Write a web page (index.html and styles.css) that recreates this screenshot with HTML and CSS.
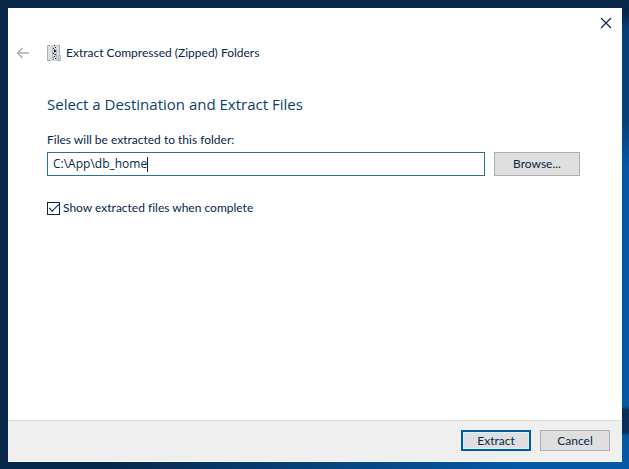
FILE: index.html
```html
<!DOCTYPE html>
<html lang="en">
<head>
<meta charset="utf-8">
<title>Extract Compressed (Zipped) Folders</title>
<link rel="stylesheet" href="styles.css">
</head>
<body>
<form class="dialog">
  <div class="titlebar">
    <button class="icon-button" type="button" aria-label="Close">
      <svg width="12" height="12" viewBox="0 0 12 12"><path d="M1 1l10 10M11 1L1 11" fill="none" stroke="#082648" stroke-width="1.2"/></svg>
    </button>
  </div>
  <header class="header">
    <button class="icon-button" type="button" aria-label="Back">
      <svg width="14" height="12" viewBox="0 0 14 12"><path d="M13 6H2M6.500 1L1.500 6l5 5" fill="none" stroke="#adadb2" stroke-width="1.500"/></svg>
    </button>
    <svg class="zip" width="14" height="18" viewBox="0 0 14 18" aria-hidden="true">
      <path d="M0 1h12v10h1v6H0z" fill="#dedede"/>
      <path d="M3 1.500H.5v15H3M10 1.500h2.500v9M10 16.500h3.500v-5H11.500v4" fill="none" stroke="#adadb2"/>
      <path d="M5 2h1v14H5zM9 5h1v11H9z" fill="#b6b8bd"/>
      <path d="M7 1h1v1H7zM8 3h1v1H8zM6 4h1v1H6zM7 6h2v2H7zM6 9h1v1H6zM8 10h1v1H8zM7 12h1v1H7zM8 14h1v1H8z" fill="#082648"/>
      <path d="M7 5h1v1H7zM7 8h1v1H7zM7 10h1v1H7zM6 13h1v1H6zM6 15h1v1H6z" fill="#5c82a3"/>
    </svg>
    <span>Extract Compressed (Zipped) Folders</span>
  </header>
  <main class="content">
    <h1>Select a Destination and Extract Files</h1>
    <label class="path-label" for="path">Files will be extracted to this folder:</label>
    <div class="path-row">
      <div class="path-box">
        <input id="path" type="text" value="C:\App\db_home">
        <span class="caret"></span>
      </div>
      <button class="button browse" type="button">Browse...</button>
    </div>
    <label class="check"><input type="checkbox" checked>Show extracted files when complete</label>
  </main>
  <footer class="footer">
    <button class="button primary" type="submit">Extract</button>
    <button class="button" type="button">Cancel</button>
  </footer>
</form>
</body>
</html>
```
FILE: styles.css
```css
* {
  box-sizing: border-box;
}

body {
  margin: 0;
  min-height: 100vh;
  padding: 8px 7px 7px 8px;
  display: flex;
  color: #082648;
  font: 12px/16px Lato, "Open Sans", sans-serif;
  font-variant-ligatures: none;
  background:
    linear-gradient(#082648 0 12px, #06407a 30px 120px, #0558a4 165px 406px, #082f5a 410px 432px, #0558a4 436px) right / 7px 100% no-repeat,
    linear-gradient(90deg, #082648 15%, #063e74 45%, #0558a4 82%) bottom / 100% 7px no-repeat,
    #082648;
}

button,
input {
  font: inherit;
  color: inherit;
}

.dialog {
  flex: 1;
  display: flex;
  flex-direction: column;
  background: #fff;
}

.titlebar {
  display: flex;
  justify-content: flex-end;
  height: 30px;
  padding: 0 10px;
}

.icon-button {
  display: flex;
  align-items: center;
  padding: 0;
  border: 0;
  background: none;
}

.header {
  display: flex;
  align-items: center;
  height: 30px;
  padding-left: 8px;
}

.zip {
  margin: 0 5px 0 17px;
}

.content {
  flex: 1;
  padding: 24px 42px 0 39px;
}

h1 {
  margin: 0 0 16px;
  font-family: "Open Sans", sans-serif;
  font-size: 15px;
  line-height: 24px;
  font-weight: 400;
  color: #0b3f6b;
}

.path-label {
  display: block;
  margin-bottom: 4px;
}

.path-row {
  display: flex;
  gap: 9px;
}

.path-box {
  flex: 1;
  display: flex;
  align-items: center;
  height: 24px;
  padding-left: 5px;
  border: 1px solid #2f7394;
}

.path-box input {
  field-sizing: content;
  padding: 0;
  border: 0;
  outline: 0;
  background: none;
  font-family: "Open Sans", sans-serif;
}

.caret {
  width: 1px;
  height: 15px;
  background: #082648;
}

.button {
  width: 70px;
  height: 21px;
  padding: 0;
  border: 1px solid #adadb2;
  background: #dfdfdf;
  line-height: 16px;
}

.browse {
  width: 86px;
  height: 24px;
}

.primary {
  border: 2px solid #0558a4;
  box-shadow: inset 0 0 0 1px #cdf6ff;
}

.check {
  display: flex;
  align-items: center;
  gap: 3px;
  margin-top: 24px;
}

.check input {
  appearance: none;
  width: 13px;
  height: 13px;
  margin: 0;
  border: 1px solid #082648;
  display: grid;
  place-items: center;
}

.check input:checked::before {
  content: "";
  width: 9px;
  height: 4px;
  margin-bottom: 3px;
  border: solid #082648;
  border-width: 0 0 1px 1px;
  transform: rotate(-45deg);
}

.footer {
  display: flex;
  justify-content: flex-end;
  gap: 9px;
  height: 42px;
  padding: 9px 12px 0;
  border-top: 1px solid #dedede;
  border-bottom: 1px solid #fff;
  background: #efefef;
}
```
